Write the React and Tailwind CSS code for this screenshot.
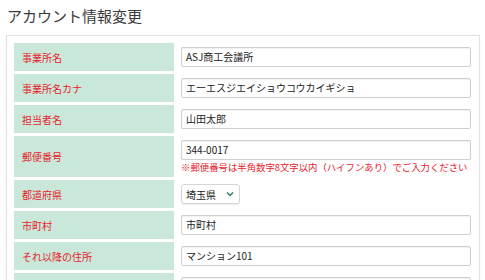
import React from "react";

const font = { fontFamily: '"Noto Sans CJK JP", "Noto Sans", sans-serif' };

function Input({ value }) {
  return (
    <div className="h-[20px] w-full rounded-[2px] border border-[#cfcfcf] bg-white px-[4px] text-[10px] leading-[18px] text-[#222] shadow-[inset_0_1px_1px_rgba(0,0,0,0.06)]">
      {value}
    </div>
  );
}

function Row({ label, children, tall }) {
  return (
    <>
      <div
        className={`flex items-center bg-[#c9e8da] pl-[8px] text-[10px] text-[#e8202a] ${
          tall ? "h-[41px]" : "h-[28px]"
        }`}
      >
        {label}
      </div>
      <div className="flex flex-col justify-center pl-[4px] pr-[1px]">{children}</div>
    </>
  );
}

export default function App() {
  return (
    <div className="h-[280px] w-[485px] overflow-hidden bg-white" style={font}>
      <div className="pl-[7px] pt-[5px] text-[15px] leading-[22px] text-[#3a3a3a]">
        アカウント情報変更
      </div>
      <div className="ml-[6px] mr-[5px] mt-[8px] border border-[#e2e2e2] p-[7px] shadow-[0_0_2px_rgba(0,0,0,0.05)]">
        <div className="grid grid-cols-[160px_1fr] gap-[3px]">
          <Row label="事業所名">
            <Input value="ASJ商工会議所" />
          </Row>
          <Row label="事業所名カナ">
            <Input value="エーエスジエイショウコウカイギショ" />
          </Row>
          <Row label="担当者名">
            <Input value="山田太郎" />
          </Row>
          <Row label="郵便番号" tall>
            <div className="pt-[1px]">
              <Input value="344-0017" />
            </div>
            <div className="whitespace-nowrap text-[9.4px] leading-[14px] text-[#e8202a]">
              ※郵便番号は半角数字8文字以内（ハイフンあり）でご入力ください
            </div>
          </Row>
          <Row label="都道府県">
            <div className="flex h-[20px] w-[59px] items-center justify-between rounded-[3px] border border-[#d5d5d5] bg-white pl-[4px] pr-[5px] text-[10px] text-[#222] shadow-[0_1px_1px_rgba(0,0,0,0.08)]">
              <span>埼玉県</span>
              <svg width="8" height="6" viewBox="0 0 8 6" fill="none">
                <path d="M1 1.5 L4 4.5 L7 1.5" stroke="#2b7a66" strokeWidth="1.5" />
              </svg>
            </div>
          </Row>
          <Row label="市町村">
            <Input value="市町村" />
          </Row>
          <Row label="それ以降の住所">
            <Input value="マンション101" />
          </Row>
          <Row label="">
            <Input value="" />
          </Row>
        </div>
      </div>
    </div>
  );
}
